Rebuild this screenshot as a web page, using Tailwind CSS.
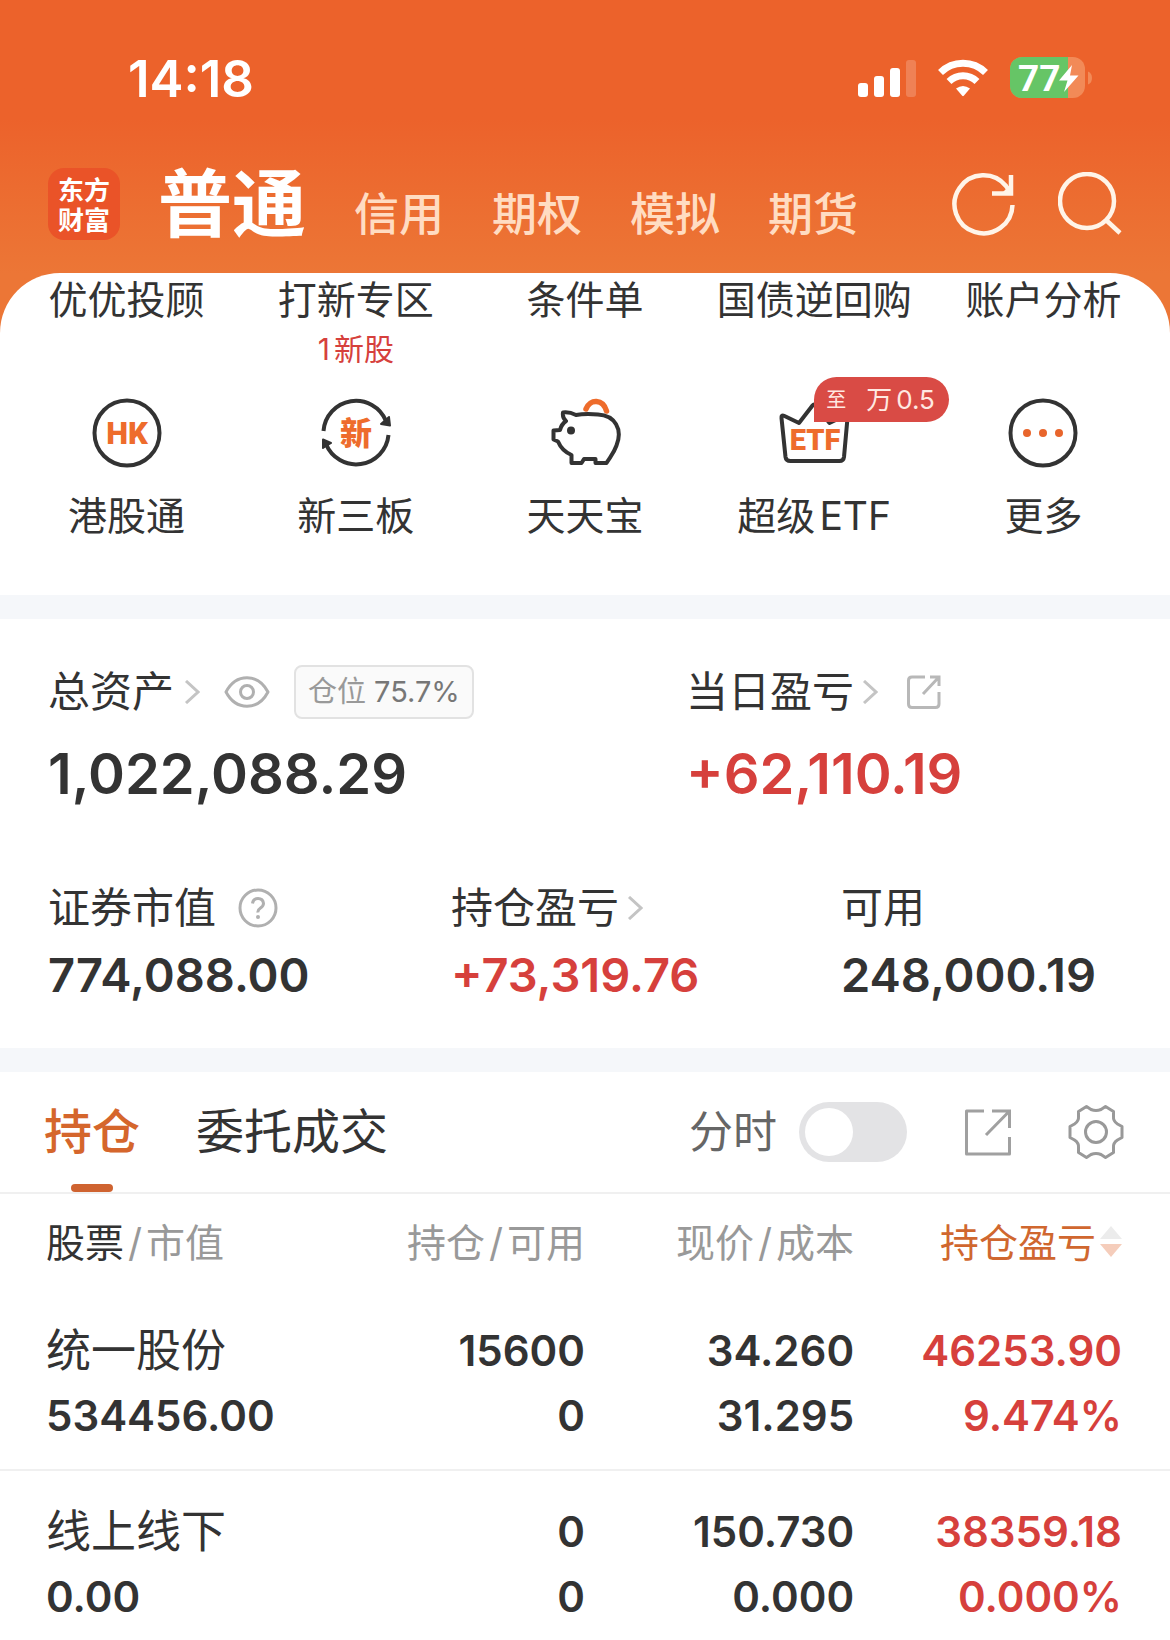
<!DOCTYPE html>
<html lang="zh-CN">
<head>
    <meta charset="UTF-8" />
    <meta name="viewport" content="width=device-width, initial-scale=1.0" />
    <title>东方财富 - 交易</title>

    <!-- Tailwind CDN -->
    <script src="https://cdn.jsdelivr.net/npm/@tailwindcss/browser@4"></script>

    <style>
        body {
            font-family: Inter, 'Noto Sans CJK SC', sans-serif;
        }
        .logo {
            font-family: 'Noto Sans CJK SC', sans-serif;
        }
        svg text {
            font-family: Roboto, 'Noto Sans CJK SC', sans-serif;
        }
    </style>
</head>

<body class="min-h-screen bg-white text-[#333333]">

<div class="bg-linear-to-b from-[#ec622b] from-20% to-[#ec7636] to-46%">

    <!-- Barra de estado -->
    <div class="flex items-center justify-between h-[156px] pl-32 pr-[78px] text-white">
        <span class="text-[51px] leading-none font-semibold">14:18</span>
        <div class="flex items-center gap-[22px]">
            <svg class="w-[58px] h-[38px]" viewBox="0 0 58 38" fill="#fff" aria-hidden="true">
                <rect x="0" y="24" width="10" height="14" rx="3" />
                <rect x="16" y="17" width="10" height="21" rx="3" />
                <rect x="32" y="9" width="10" height="29" rx="3" />
                <rect x="48" y="1" width="10" height="37" rx="3" opacity=".2" />
            </svg>
            <svg class="w-[50px] h-[38px]" viewBox="0 0 50 38" fill="none" stroke="#fff" stroke-width="7" aria-hidden="true">
                <path d="M2.500 13.500A32 32 0 0 1 47.500 13.500" />
                <path d="M11 22.500A20 20 0 0 1 39 22.500" />
                <path d="M18 29.500Q25 24.500 32 29.500L25.800 36.800Q25 37.600 24.200 36.800Z" fill="#fff" stroke="none" />
            </svg>
            <svg class="w-[82px] h-[42px]" viewBox="0 0 82 42" aria-hidden="true">
                <defs>
                    <clipPath id="pila"><rect x="0" y="0" width="75" height="41" rx="12" /></clipPath>
                </defs>
                <g clip-path="url(#pila)">
                    <rect width="75" height="41" fill="#f28a57" />
                    <rect width="58" height="41" fill="#66c566" />
                </g>
                <path d="M78 14.500Q82 16 82 21T78 27.500Z" fill="#f28a57" />
                <text x="8" y="34" fill="#fff" font-size="37" font-weight="700">77</text>
                <path d="M62 8L49 23.500H57.500L54 35L68.500 18.500H60Z" fill="#fff" />
            </svg>
        </div>
    </div>

    <!-- Cabecera -->
    <header class="flex items-center h-[117px] px-12 pb-[22px] text-white">
        <div class="logo w-[72px] h-[72px] py-1.5 rounded-2xl bg-[#ea5328] text-[26px] leading-[30px] font-bold text-center">东方<br />财富</div>
        <nav class="flex items-baseline gap-12 ml-[38px] whitespace-nowrap text-[#ffdcc2]">
            <a href="#putong" class="text-[74px] leading-[90px] font-bold text-white">普通</a>
            <a href="#xinyong" class="text-[45px] font-medium">信用</a>
            <a href="#qiquan" class="text-[45px] font-medium">期权</a>
            <a href="#moni" class="text-[45px] font-medium">模拟</a>
            <a href="#qihuo" class="text-[45px] font-medium">期货</a>
        </nav>
        <div class="flex gap-[42px] ml-auto">
            <button type="button" aria-label="刷新">
                <svg class="w-16 h-16" viewBox="0 0 64 64" fill="none" stroke="#fff4e8" stroke-width="4.500">
                    <path d="M60.500 33A29 29 0 1 1 54 14L59 21" />
                    <path d="M59 3V21.500H40" />
                    <path d="M50 21L58 13V21Z" fill="#fff4e8" stroke="none" />
                </svg>
            </button>
            <button type="button" aria-label="搜索">
                <svg class="w-16 h-16" viewBox="0 0 64 64" fill="none" stroke="#fff4e8" stroke-width="4.500">
                    <circle cx="29" cy="29" r="27" />
                    <path d="M48 48L62 61" />
                </svg>
            </button>
        </div>
    </header>

    <!-- Accesos -->
    <section class="grid grid-cols-5 h-[322px] px-3 pt-px rounded-t-[60px] bg-white text-[39px] leading-[52px] text-center whitespace-nowrap content-start">
        <a href="#tougu" class="h-[123px]">优优投顾</a>
        <a href="#daxin" class="h-[123px]">打新专区
            <span class="flex justify-center gap-1 text-[30px] leading-[46px] text-[#d6403c]"><span>1</span>新股</span>
        </a>
        <a href="#tiaojian" class="h-[123px]">条件单</a>
        <a href="#guozhai" class="h-[123px]">国债逆回购</a>
        <a href="#zhanghu" class="h-[123px]">账户分析</a>

        <a href="#ganggu" class="flex flex-col items-center gap-[21px]">
            <svg class="w-[72px] h-[72px]" viewBox="0 0 72 72" fill="none" aria-hidden="true">
                <circle cx="36" cy="36" r="32.500" stroke="#333" stroke-width="4" />
                <text x="36" y="47" text-anchor="middle" font-size="31" font-weight="900" fill="#ee6c2c">HK</text>
            </svg>
            港股通
        </a>
        <a href="#xinsanban" class="flex flex-col items-center gap-[21px]">
            <svg class="w-[72px] h-[72px]" viewBox="0 0 72 72" fill="none" stroke="#333" stroke-width="4" aria-hidden="true">
                <path d="M3.500 34A32.500 32.500 0 0 1 66 24" />
                <path d="M68.500 38A32.500 32.500 0 0 1 6 47" />
                <path d="M69 20L70 28.500L61 27Z" fill="#333" stroke-width="2" stroke-linejoin="round" />
                <path d="M3 42.500L11 46L3 51Z" fill="#333" stroke-width="2" stroke-linejoin="round" />
                <text x="36" y="48" text-anchor="middle" font-size="32" font-weight="900" fill="#ee6c2c" stroke="none">新</text>
            </svg>
            新三板
        </a>
        <a href="#tiantianbao" class="flex flex-col items-center gap-[21px]">
            <svg class="w-[72px] h-[72px]" viewBox="0 0 72 72" fill="none" stroke="#333" stroke-width="4" stroke-linejoin="round" stroke-linecap="round" aria-hidden="true">
                <path d="M37 12C41 1.500 54 2 57.500 14" stroke="#ee6c2c" stroke-width="5.500" />
                <path d="M27 18C23 16 18 15 14 15.500C13.500 19 14.500 22 17 24C13.500 26.500 12 29 11 33L4.500 33.500V42.500L9 44.500C11.500 50.500 15.500 55 22.500 58V66H32.500L35 62H46.500V66H57.500C61 60 64.500 57 67.500 48.500C74 32 66 18.500 49 17.500C42 17 33 17 27 18Z" />
                <circle cx="22" cy="33.500" r="4" fill="#333" stroke="none" />
            </svg>
            天天宝
        </a>
        <a href="#etf" class="relative flex flex-col items-center gap-[21px]">
            <svg class="w-[72px] h-[72px]" viewBox="0 0 72 72" fill="none" stroke="#333" stroke-width="4" stroke-linejoin="round" aria-hidden="true">
                <path d="M3.500 21Q3 17.500 6.500 19L21 26L34.500 8.500Q36 6.500 37.500 8.500L51.500 26L66 19Q70 17.500 69.500 21L66 60Q65.500 64 61.500 64H12.500Q8 64 7.500 60Z" />
                <text x="37" y="53" text-anchor="middle" font-size="29" font-weight="900" fill="#ee6c2c" stroke="none">ETF</text>
            </svg>
            <span class="flex gap-1">超级 <span>ETF</span></span>
            <span class="absolute left-1/2 -top-5 flex items-center h-[45px] w-[135px] pl-3 rounded-full rounded-bl-none bg-[#d94b45] text-[26px] text-[#ffe9e2]">
                <span class="mr-5 text-[20px]">至</span>万<span class="ml-1">0.5</span>
            </span>
        </a>
        <a href="#gengduo" class="flex flex-col items-center gap-[21px]">
            <svg class="w-[72px] h-[72px]" viewBox="0 0 72 72" aria-hidden="true">
                <circle cx="36" cy="36" r="32.500" fill="none" stroke="#333" stroke-width="4" />
                <g fill="#e8652c">
                    <circle cx="20" cy="36" r="4" />
                    <circle cx="36" cy="36" r="4" />
                    <circle cx="52" cy="36" r="4" />
                </g>
            </svg>
            更多
        </a>
    </section>
</div>

<!-- Resumen de la cuenta -->
<main>
    <section class="h-[453px] border-t-24 border-[#f5f7fa] pt-[43px] text-[42px] leading-[60px] whitespace-nowrap">
        <div class="flex">
            <div class="w-[686px] pl-12">
                <div class="flex items-center">
                    <a href="#zichan" class="flex items-center gap-[10px]">总资产
                        <svg class="w-4 h-6" viewBox="0 0 16 24" fill="none" stroke="#c4c4c4" stroke-width="3"><path d="M2 1L14 12L2 23" /></svg>
                    </a>
                    <button type="button" aria-label="隐藏金额" class="ml-6">
                        <svg class="w-[46px] h-8" viewBox="0 0 46 32" fill="none" stroke="#b0b0b0" stroke-width="3">
                            <path d="M2 16C12-3 34-3 44 16C34 35 12 35 2 16Z" stroke-linejoin="round" />
                            <circle cx="23" cy="16" r="6.500" />
                        </svg>
                    </button>
                    <span class="flex items-center gap-2 h-[54px] ml-6 px-3 rounded-lg border-2 border-[#e2e2e2] bg-[#fafafa] text-[29px] text-[#999999]">仓位 <span class="text-[#777777]">75.7%</span></span>
                </div>
                <p class="mt-5 text-[56px] leading-[65px] font-semibold">1,022,088.29</p>
            </div>
            <div>
                <div class="flex items-center">
                    <a href="#yingkui" class="flex items-center gap-2">当日盈亏
                        <svg class="w-4 h-6" viewBox="0 0 16 24" fill="none" stroke="#c4c4c4" stroke-width="3"><path d="M2 1L14 12L2 23" /></svg>
                    </a>
                    <button type="button" aria-label="分享盈亏" class="ml-7">
                        <svg class="w-9 h-9" viewBox="0 0 36 36" fill="none" stroke="#b8b8b8" stroke-width="3">
                            <path d="M19 3H6Q2.500 3 2.500 6.500V30Q2.500 33.500 6 33.500H29.500Q33 33.500 33 30V18" />
                            <path d="M24 3H33V12M33 3L17 20" />
                        </svg>
                    </button>
                </div>
                <p class="mt-5 text-[56px] leading-[65px] font-semibold text-[#d6403c]">+62,110.19</p>
            </div>
        </div>

        <div class="flex mt-[71px]">
            <div class="w-[451px] pl-12">
                <div class="flex items-center gap-[22px]">证券市值
                    <button type="button" aria-label="证券市值说明">
                        <svg class="w-10 h-10" viewBox="0 0 40 40" fill="none" stroke="#b0b0b0" stroke-width="3">
                            <circle cx="20" cy="20" r="18" />
                            <path d="M14.500 15.500Q15 10.500 20 10.500T25.500 15.500Q25.500 18 22.500 20T20 24.500" />
                            <circle cx="20" cy="29" r="2" fill="#b0b0b0" stroke="none" />
                        </svg>
                    </button>
                </div>
                <p class="mt-1 text-[47px] leading-[65px] font-semibold">774,088.00</p>
            </div>
            <div class="w-[390px]">
                <a href="#chicang-yingkui" class="flex items-center gap-2">持仓盈亏
                    <svg class="w-4 h-6" viewBox="0 0 16 24" fill="none" stroke="#c4c4c4" stroke-width="3"><path d="M2 1L14 12L2 23" /></svg>
                </a>
                <p class="mt-1 text-[47px] leading-[65px] font-semibold text-[#d6403c]">+73,319.76</p>
            </div>
            <div>
                <p>可用</p>
                <p class="mt-1 text-[47px] leading-[65px] font-semibold">248,000.19</p>
            </div>
        </div>
    </section>

    <!-- Posiciones -->
    <section class="whitespace-nowrap">
        <div class="flex pl-11 pr-[46px] border-t-24 border-b-2 border-t-[#f5f7fa] border-b-[#f0f0f0] text-[48px]">
            <a href="#chicang" class="relative flex items-center h-[120px] font-medium text-[#d5662c]">持仓
                <span class="absolute left-1/2 -translate-x-1/2 bottom-0 w-[42px] h-2 rounded bg-[#cf6330]"></span>
            </a>
            <a href="#weituo" class="flex items-center h-[120px] ml-14">委托成交</a>
            <div class="flex items-center h-[120px] ml-auto">
                <label for="fenshi" class="text-[44px] text-[#666666]">分时</label>
                <input id="fenshi" type="checkbox" role="switch" class="appearance-none flex items-center w-[108px] h-[60px] ml-[22px] px-[6px] rounded-full bg-[#e3e3e5] before:block before:w-12 before:h-12 before:rounded-full before:bg-white checked:bg-[#cf6330] checked:before:ml-auto" />
                <button type="button" aria-label="导出" class="ml-[57px]">
                    <svg class="w-12 h-12" viewBox="0 0 48 48" fill="none" stroke="#a0a0a0" stroke-width="3">
                        <path d="M20 3H2.500V46H45.500V29" stroke-linejoin="round" />
                        <path d="M28 3H45.500V20M45.500 3L22 27" />
                    </svg>
                </button>
                <button type="button" aria-label="设置" class="ml-14">
                    <svg class="w-14 h-14" viewBox="-28 -28 56 56" fill="none" stroke="#999" stroke-width="3" stroke-linejoin="round">
                        <path d="M26 -5.500V5.500L21.500 8Q17 11 17.500 15.500V20.500L9.500 25.500L5 22.500Q0 20.500 -5 22.500L-9.500 25.500L-17.500 20.500V15.500Q-17 11 -21.500 8L-26 5.500V-5.500L-21.500 -8Q-17 -11 -17.500 -15.500V-20.500L-9.500 -25.500L-5 -22.500Q0 -20.500 5 -22.500L9.500 -25.500L17.500 -20.500V-15.500Q17 -11 21.500 -8Z" />
                        <circle r="10.500" />
                    </svg>
                </button>
            </div>
        </div>

        <table class="w-full table-fixed text-right text-[42px] leading-[65px] font-semibold">
            <colgroup>
                <col class="w-[35%]" />
                <col class="w-[15%]" />
                <col class="w-[23%]" />
                <col class="w-[27%]" />
            </colgroup>
            <thead>
                <tr class="h-24 text-[39px] text-[#999999]">
                    <th scope="col" class="pl-[46px] text-left font-normal"><span class="text-[#333333]">股票</span><span class="mx-1">/</span>市值</th>
                    <th scope="col" class="font-normal"><div class="flex justify-end">持仓<span class="mx-1">/</span>可用</div></th>
                    <th scope="col" class="font-normal">现价<span class="mx-1">/</span>成本</th>
                    <th scope="col" class="pr-12 font-normal text-[#d0672f]">
                        <button type="button" class="inline-flex items-center gap-1">持仓盈亏
                            <svg class="w-[22px] h-8" viewBox="0 0 22 32" aria-hidden="true">
                                <path d="M11 0L22 13H0Z" fill="#ececec" />
                                <path d="M0 18H22L11 31Z" fill="#f5cdbb" />
                            </svg>
                        </button>
                    </th>
                </tr>
            </thead>
            <tbody>
                <tr class="h-[180px] border-b-2 border-[#f0f0f0]">
                    <td class="pt-1.5 pl-[46px] text-left"><span class="block text-[45px] font-normal">统一股份</span>534456.00</td>
                    <td class="pt-1.5">15600<br />0</td>
                    <td class="pt-1.5">34.260<br />31.295</td>
                    <td class="pt-1.5 pr-12 text-[#d6403c]">46253.90<br />9.474%</td>
                </tr>
                <tr class="h-[180px]">
                    <td class="pt-1.5 pl-[46px] text-left"><span class="block text-[45px] font-normal">线上线下</span>0.00</td>
                    <td class="pt-1.5">0<br />0</td>
                    <td class="pt-1.5">150.730<br />0.000</td>
                    <td class="pt-1.5 pr-12 text-[#d6403c]">38359.18<br />0.000%</td>
                </tr>
            </tbody>
        </table>
    </section>
</main>

</body>
</html>
